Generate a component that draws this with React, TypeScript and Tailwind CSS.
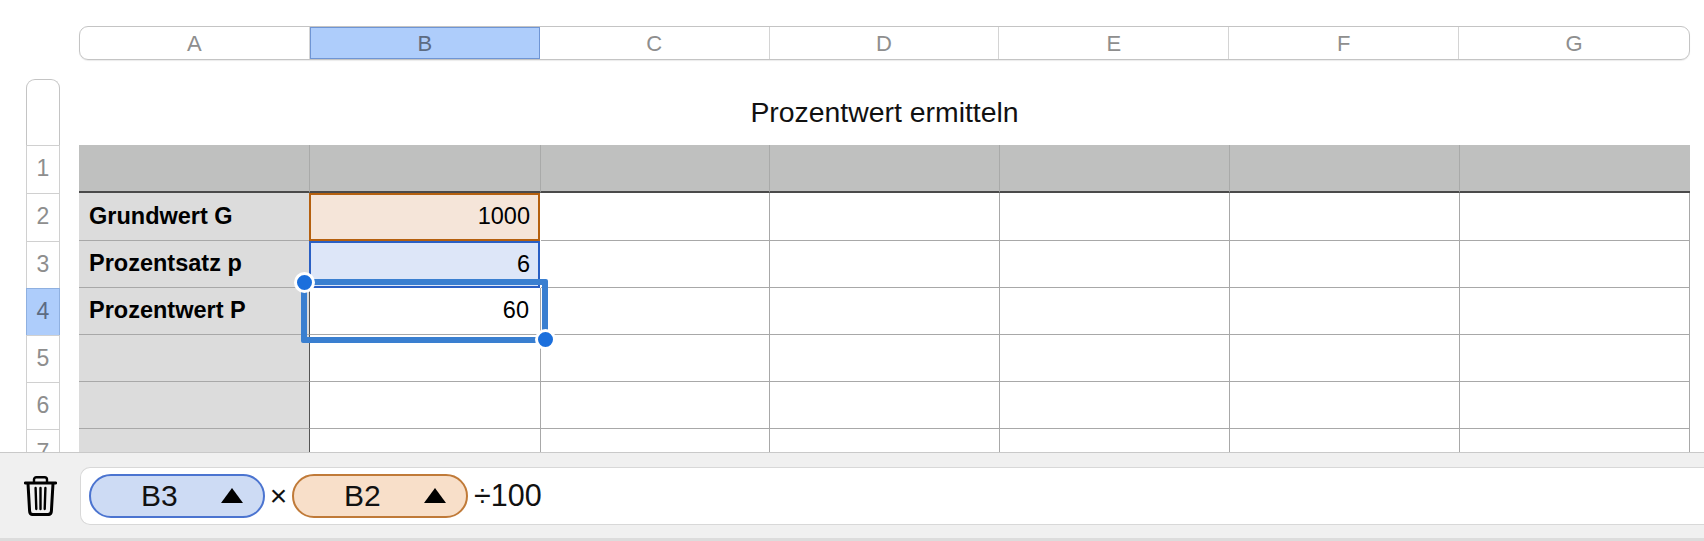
const font = "font-['Liberation_Sans',Arial,sans-serif]";

const columns = [
  { name: "A", w: "w-[231px]" },
  { name: "B", w: "w-[231px]" },
  { name: "C", w: "w-[229px]" },
  { name: "D", w: "w-[230px]" },
  { name: "E", w: "w-[230px]" },
  { name: "F", w: "w-[230px]" },
  { name: "G", w: "w-[230px]" },
];
const rows = [
  { num: "1", h: "h-[48px]", label: "" },
  { num: "2", h: "h-[48px]", label: "Grundwert G" },
  { num: "3", h: "h-[47px]", label: "Prozentsatz p" },
  { num: "4", h: "h-[47px]", label: "Prozentwert P" },
  { num: "5", h: "h-[47px]", label: "" },
  { num: "6", h: "h-[47px]", label: "" },
  { num: "7", h: "h-[47px]", label: "" },
];

const ColumnHeader = () => (
  <div className="flex h-[34px] w-[1611px] overflow-hidden rounded-[9px] border border-[#c4c4c4] shadow-[0_1px_1px_rgba(0,0,0,0.08)]">
    {columns.map((c) => (
      <div
        key={c.name}
        className={
          c.name === "B"
            ? "flex w-[230.2px] items-center justify-center border border-[#6f95d4] bg-[#aecdfb] text-[22px] text-[#5c6b82]"
            : "flex w-[230.2px] items-center justify-center border-r border-[#d4d4d4] text-[22px] text-[#8e8e8e] last:border-r-0"
        }
      >
        {c.name}
      </div>
    ))}
  </div>
);

const RowHeader = () => (
  <div className="w-[34px] shrink-0">
    <div className="h-[66px] rounded-t-[9px] border-x border-t border-[#c4c4c4]" />
    {rows.map((r) => (
      <div
        key={r.num}
        className={`${r.h} flex items-center justify-center border-x border-t pb-[2px] text-[23px] ${
          r.num === "4"
            ? "border-[#8fb0e0] bg-[#aecdfb] text-[#5c6b82]"
            : "border-[#d0d0d0] text-[#8e8e8e]"
        }`}
      >
        {r.num}
      </div>
    ))}
  </div>
);

const Handle = ({ className }: { className: string }) => (
  <div
    className={`absolute z-20 h-[21px] w-[21px] rounded-full border-[3.5px] border-white bg-[#1b6fdc] ${className}`}
  />
);

const BodyCell = ({ row, col }: { row: (typeof rows)[number]; col: number }) => {
  const n = row.num;
  const w = columns[col].w;

  if (n === "1") {
    return (
      <div
        className={`${row.h} ${w} border-r border-b-2 border-r-[#a9aaa9] border-b-[#4a4a4a] bg-[#bfc0bf] last:border-r-0`}
      />
    );
  }
  if (col === 0) {
    return (
      <div
        className={`${row.h} ${w} flex items-center border-r border-b border-b-[#a8a8a8] bg-[#dcdcdc] pl-[10px] text-[23.5px] font-bold text-black ${
          n === "2" || n === "3" ? "border-r-[#a8a8a8]" : "border-r-[#555555]"
        }`}
      >
        {row.label}
      </div>
    );
  }
  if (col === 1 && n === "2") {
    return (
      <div className={`${row.h} ${w} relative -left-px flex items-center justify-end border-2 border-[#b5600f] bg-[#f5e5d9] pr-[8px] text-[23.5px] text-black`}>
        1000
      </div>
    );
  }
  if (col === 1 && n === "3") {
    return (
      <div className={`${row.h} ${w} relative -left-px flex items-center justify-end border-2 border-[#2a5fc4] bg-[#dde6f8] pr-[8px] text-[23.5px] text-black`}>
        6
      </div>
    );
  }
  if (col === 1 && n === "4") {
    return (
      <div className={`${row.h} ${w} relative flex items-center justify-end border-r border-b border-[#a8a8a8] pr-[11px] text-[23.5px] text-black`}>
        60
        {/* selection frame */}
        <div className="pointer-events-none absolute -top-[9px] -left-[9px] z-10 h-[64px] w-[247px] rounded-[2px] border-[6px] border-[#3a7fd0]" />
        <Handle className="-top-[16px] -left-[16px]" />
        <Handle className="-right-[16px] -bottom-[16px]" />
      </div>
    );
  }
  return <div className={`${row.h} ${w} border-r border-b border-[#a8a8a8]`} />;
};

const Table = () => (
  <div className="w-[1611px] shrink-0">
    <div className="flex h-[66px] items-center justify-center text-[28.4px] text-[#111111]">
      Prozentwert ermitteln
    </div>
    {rows.map((row) => (
      <div key={row.num} className="flex">
        {columns.map((c, i) => (
          <BodyCell key={c.name} row={row} col={i} />
        ))}
      </div>
    ))}
  </div>
);

const TrashIcon = () => (
  <svg width="33" height="40" viewBox="0 0 33 40" fill="none" stroke="#000" strokeLinecap="round" strokeLinejoin="round">
    <path d="M1.2 7H31.8" strokeWidth="2.8" />
    <path d="M10 6V3.6C10 2 11 1.2 12.4 1.2H20.6C22 1.2 23 2 23 3.6V6" strokeWidth="2.4" />
    <path d="M4 7.5L5.6 35C5.7 37.4 7.2 38.6 9.2 38.6H23.8C25.8 38.6 27.3 37.4 27.4 35L29 7.5" strokeWidth="3" />
    <path d="M11.6 12L12.3 33M16.5 12V33M21.4 12L20.7 33" strokeWidth="2.4" />
  </svg>
);

const Pill = ({ label, className }: { label: string; className: string }) => (
  <div className={`relative flex h-[44px] w-[176px] items-center rounded-full border-2 ${className}`}>
    <span className="ml-[50px] text-[30px] leading-none text-[#111111]">{label}</span>
    <svg className="absolute top-[12px] right-[20px]" width="22" height="15" viewBox="0 0 22 15">
      <path d="M11 0L22 15H0Z" fill="#000" />
    </svg>
  </div>
);

const FormulaBar = () => (
  <div className="flex h-[89px] shrink-0 items-center border-t border-b-[3px] border-t-[#c9c9c9] border-b-[#dcdcdc] bg-[#f0f0f0]">
    <div className="flex w-[80px] shrink-0 justify-start pl-[24px]">
      <TrashIcon />
    </div>
    <div className="flex h-[58px] flex-1 items-center rounded-l-[10px] border border-r-0 border-[#d8d8d8] bg-white pl-[8px]">
      <Pill label="B3" className="border-[#4b74d0] bg-[#cddbf4]" />
      <span className="w-[27px] text-center text-[30px] leading-none text-[#111111]">×</span>
      <Pill label="B2" className="border-[#c07a38] bg-[#f8dfc9]" />
      <span className="ml-[6px] text-[30.5px] text-[#111111]">÷100</span>
    </div>
  </div>
);

const App = () => {
  return (
    <div className={`${font} flex h-[541px] w-[1704px] flex-col overflow-hidden bg-white`}>
      <div className="min-h-0 flex-1 overflow-hidden">
        <div className="pt-[26px] pl-[79px]">
          <ColumnHeader />
        </div>
        <div className="mt-[19px] flex gap-[19px] pl-[26px]">
          <RowHeader />
          <Table />
        </div>
      </div>
      <FormulaBar />
    </div>
  );
};

export default App;
